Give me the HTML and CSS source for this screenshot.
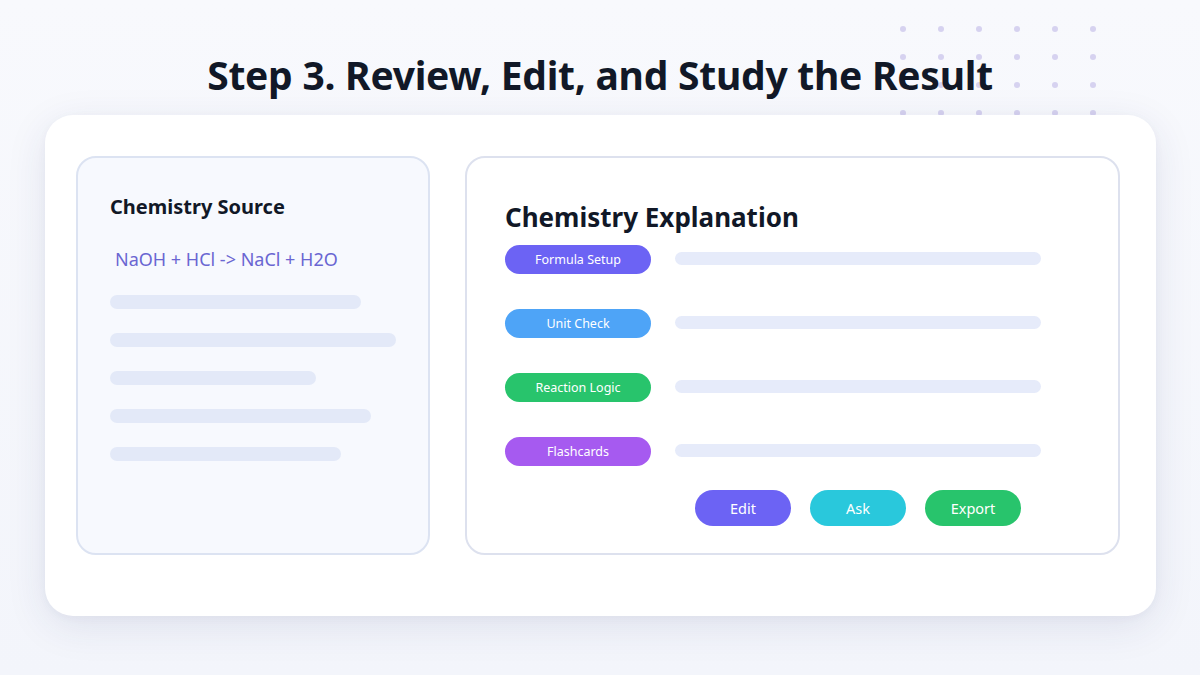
FILE: index.html
```html
<!DOCTYPE html>
<html>
<head>
<meta charset="utf-8">
<link rel="stylesheet" href="styles.css">
</head>
<body>
<div class="page">
  <div class="dots">
    <span></span><span></span><span></span><span></span><span></span><span></span>
    <span></span><span></span><span></span><span></span><span></span><span></span>
    <span></span><span></span><span></span><span></span><span></span><span></span>
    <span></span><span></span><span></span><span></span><span></span><span></span>
  </div>
  <header class="header">
    <h1 class="title">Step 3. Review, Edit, and Study the Result</h1>
  </header>
  <main class="card">
    <section class="source">
      <h2 class="source-title">Chemistry Source</h2>
      <div class="formula">NaOH + HCl -&gt; NaCl + H2O</div>
      <div class="lines">
        <div class="line" style="width:251px"></div>
        <div class="line" style="width:286px"></div>
        <div class="line" style="width:206px"></div>
        <div class="line" style="width:261px"></div>
        <div class="line" style="width:231px"></div>
      </div>
    </section>
    <section class="explain">
      <h2 class="explain-title">Chemistry Explanation</h2>
      <div class="rows">
        <div class="row"><span class="pill pill-indigo">Formula Setup</span><span class="bar"></span></div>
        <div class="row"><span class="pill pill-blue">Unit Check</span><span class="bar"></span></div>
        <div class="row"><span class="pill pill-green">Reaction Logic</span><span class="bar"></span></div>
        <div class="row"><span class="pill pill-purple">Flashcards</span><span class="bar"></span></div>
      </div>
      <div class="actions">
        <button class="btn btn-indigo">Edit</button>
        <button class="btn btn-cyan">Ask</button>
        <button class="btn btn-green">Export</button>
      </div>
    </section>
  </main>
</div>
</body>
</html>
```

FILE: styles.css
```css
* { box-sizing: border-box; }
html, body { margin: 0; padding: 0; }
body {
  font-family: "Noto Sans", "Open Sans", sans-serif;
  background: #f5f7fc;
  width: 1200px;
  height: 675px;
  overflow: hidden;
}
.page {
  position: relative;
  width: 1200px;
  height: 675px;
  background: linear-gradient(180deg, #f8f9fd 0%, #f3f5fb 100%);
}
.dots {
  position: absolute;
  left: 900px;
  top: 26px;
  display: grid;
  grid-template-columns: repeat(6, 6px);
  grid-auto-rows: 6px;
  column-gap: 32px;
  row-gap: 22px;
}
.dots span {
  width: 6px;
  height: 6px;
  border-radius: 50%;
  background: #d6d2f0;
}
.header {
  position: relative;
  padding-top: 35px;
  height: 115px;
  display: flex;
  justify-content: center;
}
.title {
  margin: 0;
  font-size: 39px;
  line-height: 80px;
  font-weight: 700;
  color: #111827;
  letter-spacing: -0.25px;
}
.card {
  position: relative;
  margin-left: 45px;
  width: 1111px;
  height: 501px;
  background: #ffffff;
  border-radius: 28px;
  box-shadow: 0 10px 40px rgba(40, 50, 110, 0.10), 0 2px 8px rgba(40, 50, 110, 0.04);
  padding: 41px 36px 0 31px;
  display: flex;
  gap: 35px;
}
.source {
  width: 354px;
  height: 399px;
  background: #f7f9fe;
  border: 2px solid #dce3f2;
  border-radius: 20px;
  padding: 34px 0 0 32px;
}
.source-title {
  margin: 0;
  font-size: 20px;
  line-height: 30px;
  font-weight: 700;
  color: #111827;
}
.formula {
  margin: 24px 0 0 5px;
  font-size: 18px;
  line-height: 26px;
  color: #6a66d2;
}
.lines {
  margin-top: 23px;
  display: flex;
  flex-direction: column;
  gap: 24px;
}
.line {
  height: 14px;
  border-radius: 7px;
  background: #e3e9f8;
}
.explain {
  width: 655px;
  height: 399px;
  background: #ffffff;
  border: 2px solid #dde1ee;
  border-radius: 20px;
  padding: 40px 0 0 38px;
}
.explain-title {
  margin: 0;
  font-size: 26px;
  line-height: 38px;
  font-weight: 700;
  color: #111827;
}
.rows {
  margin-top: 9px;
  display: flex;
  flex-direction: column;
  gap: 35px;
}
.row {
  display: flex;
  align-items: center;
  gap: 24px;
  height: 29px;
}
.pill {
  width: 146px;
  height: 29px;
  border-radius: 15px;
  color: #ffffff;
  font-size: 12.5px;
  line-height: 29px;
  text-align: center;
}
.pill-indigo { background: #6c63f4; }
.pill-blue { background: #4ea4f7; }
.pill-green { background: #28c46c; }
.pill-purple { background: #a65af0; }
.bar {
  width: 366px;
  height: 13px;
  border-radius: 7px;
  background: #e6ebfa;
  margin-top: -2px;
}
.actions {
  margin: 24px 0 0 190px;
  display: flex;
  gap: 19px;
}
.btn {
  width: 96px;
  height: 36px;
  border: 0;
  border-radius: 18px;
  color: #ffffff;
  font-family: "Noto Sans", "Open Sans", sans-serif;
  font-size: 14.5px;
  line-height: 36px;
  padding: 0;
}
.btn-indigo { background: #6c63f4; }
.btn-cyan { background: #29c8dc; }
.btn-green { background: #28c46c; }
```
